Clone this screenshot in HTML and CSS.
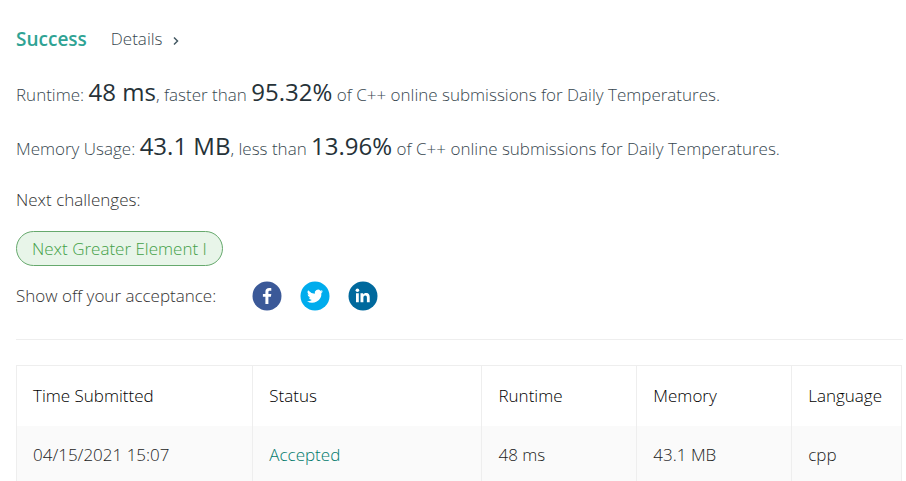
FILE: index.html
```html
<!DOCTYPE html>
<html lang="en">
<head>
<meta charset="utf-8">
<title>Submission Result</title>
<link rel="stylesheet" href="styles.css">
</head>
<body>
<main class="result">
  <header class="head">
    <span class="status">Success</span>
    <a class="details" href="#details">Details
      <svg class="chevron" viewBox="0 0 8 10" aria-hidden="true"><path d="M2 1.500 5.500 5 2 8.500"/></svg>
    </a>
  </header>
  <p class="stat">Runtime: <span class="figure">48 ms</span>, faster than <span class="figure">95.32%</span> of C++ online submissions for Daily Temperatures.</p>
  <p class="stat">Memory Usage: <span class="figure">43.1 MB</span>, less than <span class="figure">13.96%</span> of C++ online submissions for Daily Temperatures.</p>
  <p class="next">Next challenges:</p>
  <a class="challenge" href="#next">Next Greater Element I</a>
  <div class="share">
    <span class="share-label">Show off your acceptance:</span>
    <a class="social" href="#facebook" aria-label="Facebook"><svg viewBox="0 0 30 30"><circle cx="15" cy="15" r="14.5" fill="#3b5998"/><path fill="#fff" d="M16.400 23v-7.300h2.500l.4-2.800h-2.900v-1.800c0-.8.3-1.400 1.400-1.400h1.500V7.200c-.3 0-1.200-.1-2.200-.1-2.200 0-3.700 1.300-3.700 3.700v2.100h-2.500v2.800h2.500V23z"/></svg></a>
    <a class="social" href="#twitter" aria-label="Twitter"><svg viewBox="0 0 30 30"><circle cx="15" cy="15" r="14.5" fill="#00aced"/><path fill="#fff" d="M23 10.200a6.600 6.600 0 0 1-1.900.5 3.300 3.300 0 0 0 1.400-1.800 6.600 6.600 0 0 1-2.100.8 3.300 3.300 0 0 0-5.600 3A9.300 9.300 0 0 1 8.100 9.300a3.300 3.300 0 0 0 1 4.400 3.300 3.300 0 0 1-1.500-.4 3.300 3.300 0 0 0 2.600 3.200 3.300 3.300 0 0 1-1.500.1 3.300 3.300 0 0 0 3.100 2.300A6.600 6.600 0 0 1 7 20.200a9.300 9.300 0 0 0 14.400-8.300 6.700 6.700 0 0 0 1.600-1.700z"/></svg></a>
    <a class="social" href="#linkedin" aria-label="LinkedIn"><svg viewBox="0 0 30 30"><circle cx="15" cy="15" r="14.5" fill="#00699d"/><path fill="#fff" d="M8 12.300h2.800v9H8zM12.500 12.300h2.700v1.200c.5-.9 1.500-1.500 2.800-1.500 2.900 0 3.700 1.900 3.700 4.300v5h-2.800v-4.500c0-1.200-.1-2.400-1.600-2.400s-1.900 1.200-1.900 2.400v4.500h-2.900z"/><circle cx="9.400" cy="9.300" r="1.800" fill="#fff"/></svg></a>
  </div>
  <table class="submissions">
    <thead><tr><th class="c-time">Time Submitted</th><th class="c-status">Status</th><th class="c-run">Runtime</th><th class="c-mem">Memory</th><th>Language</th></tr></thead>
    <tbody><tr><td>04/15/2021 15:07</td><td><a class="accepted" href="#submission">Accepted</a></td><td>48 ms</td><td>43.1 MB</td><td>cpp</td></tr></tbody>
  </table>
</main>
</body>
</html>
```
FILE: styles.css
```css
* { box-sizing: border-box; }
body { margin: 0; background: #fff; color: #37474f; font: 300 17px/26px "Open Sans", "Noto Sans", sans-serif; overflow: hidden; }
a { text-decoration: none; }
.result { padding: 26px 3px 0 16px; }
.head { display: flex; align-items: center; gap: 24px; padding-bottom: 4px; }
.status { color: #2fa394; font-size: 19px; font-weight: 600; }
.details { display: flex; align-items: center; gap: 10px; color: #37474f; }
.chevron { width: 8px; height: 10px; margin-top: 3px; fill: none; stroke: #455a64; stroke-width: 1.5; }
.stat { margin: 24px 0 0; line-height: 30px; white-space: nowrap; }
.figure { color: #263238; font-size: 24px; font-weight: 400; line-height: 24px; }
.next { margin: 23px 0 18px; color: #333; }
.challenge { display: inline-block; padding: 4px 15px; border: 1px solid #66a96d; border-radius: 18px; background: #e8f5e9; color: #43a047; line-height: 25px; }
.share { display: flex; align-items: center; gap: 18px; padding: 15px 0 28px; border-bottom: 1px solid #eee; color: #333; }
.share-label { margin-right: 18px; }
.social, .social svg { display: block; width: 30px; height: 30px; }
.submissions { width: calc(100% - 1px); margin-top: 25px; border-collapse: collapse; table-layout: fixed; color: #222; }
th, td { height: 60px; padding: 0 16px; border: 1px solid #eee; text-align: left; font-weight: 300; }
th { color: #000; border-bottom: 0; }
td { background: #fafafa; border-top: 0; }
.accepted { color: #00796b; }
.c-time { width: 26.7%; }
.c-status { width: 25.9%; }
.c-run, .c-mem { width: 17.5%; }
```
